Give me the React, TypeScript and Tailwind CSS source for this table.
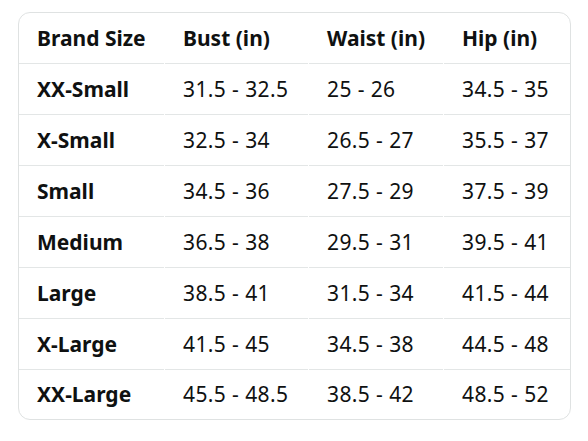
const headers = ["Brand Size", "Bust (in)", "Waist (in)", "Hip (in)"];

const rows = [
  ["XX-Small", "31.5 - 32.5", "25 - 26", "34.5 - 35"],
  ["X-Small", "32.5 - 34", "26.5 - 27", "35.5 - 37"],
  ["Small", "34.5 - 36", "27.5 - 29", "37.5 - 39"],
  ["Medium", "36.5 - 38", "29.5 - 31", "39.5 - 41"],
  ["Large", "38.5 - 41", "31.5 - 34", "41.5 - 44"],
  ["X-Large", "41.5 - 45", "34.5 - 38", "44.5 - 48"],
  ["XX-Large", "45.5 - 48.5", "38.5 - 42", "48.5 - 52"],
];

export default function App() {
  return (
    <div className="min-h-[441px] w-[588px] bg-white pl-[18px] pt-[12px] font-['Noto_Sans',sans-serif] text-[21px] text-[#0f1111]">
      <div className="w-[553px] overflow-hidden rounded-[12px] border border-[#dfe2e2]">
        <div className="grid grid-cols-[145px_143px_134px_128px] gap-x-px">
          {headers.map((h) => (
            <div
              key={h}
              className="flex h-[51px] items-center border-b border-[#e3e6e6] pl-[18px] pt-px font-bold"
            >
              {h}
            </div>
          ))}
          {rows.map((r, i) =>
            r.map((c, j) => (
              <div
                key={`${i}-${j}`}
                className={`flex items-center pl-[18px] ${
                  i < rows.length - 1
                    ? "h-[51px] border-b border-[#e3e6e6] pt-[2px]"
                    : "h-[49px] pt-px"
                } ${j === 0 ? "font-bold" : "tracking-[0.4px]"}`}
              >
                {c}
              </div>
            ))
          )}
        </div>
      </div>
    </div>
  );
}
